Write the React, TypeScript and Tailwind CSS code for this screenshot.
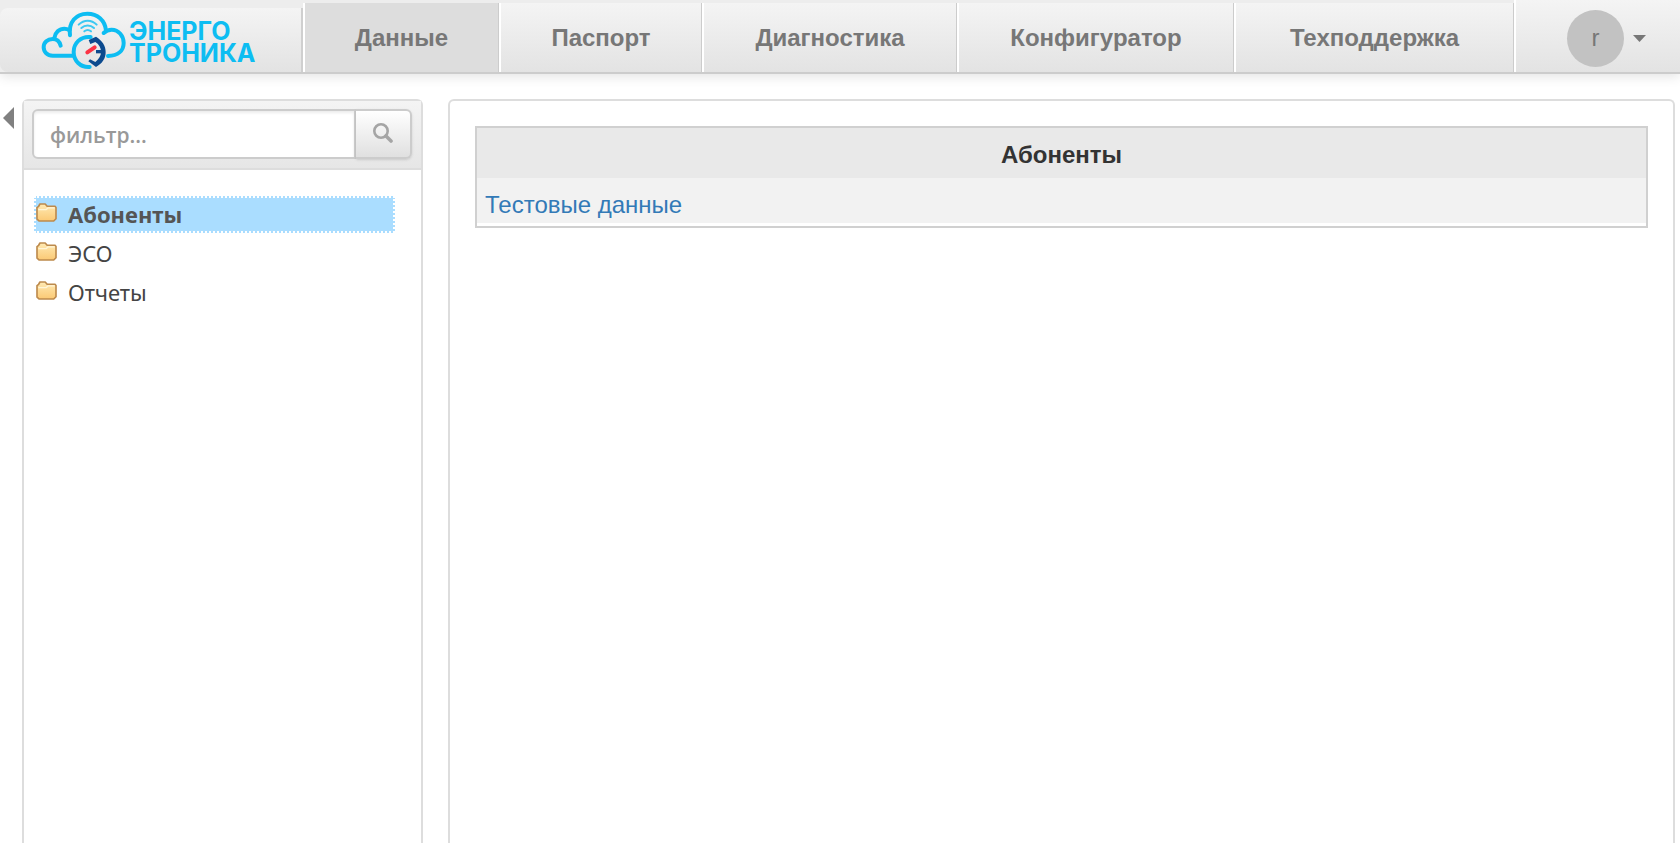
import React from 'react';

interface NavTab {
  label: string;
  width: string;
  active?: boolean;
}

interface TreeNode {
  label: string;
  selected?: boolean;
}

const tabs: NavTab[] = [
  { label: 'Данные', width: 'min-w-[196px]', active: true },
  { label: 'Паспорт', width: 'min-w-[203px]' },
  { label: 'Диагностика', width: 'min-w-[255px]' },
  { label: 'Конфигуратор', width: 'min-w-[277px]' },
  { label: 'Техподдержка', width: 'min-w-[280px]' },
];

const nodes: TreeNode[] = [
  { label: 'Абоненты', selected: true },
  { label: 'ЭСО' },
  { label: 'Отчеты' },
];

const LogoMark: React.FC = () => (
  <svg viewBox="120 30 261 180" className="h-[60px] w-[87px] shrink-0" fill="none" aria-hidden="true">
    <g stroke="#0dbdf2" strokeWidth="12" strokeLinecap="round" strokeLinejoin="round">
      <path d="M218 167H158C142 167 131 156 131 142C131 127 143 117 158 117C170 117 179 125 182 137" />
      <path d="M163 114C165 98 178 86 193 86C199 86 204 88 209 91" />
      <path d="M210 106C205 66 228 41 262 41C292 41 315 61 318 91" />
      <path d="M311 99C318 92 325 89 335 89C356 89 371 108 371 129C371 152 354 167 324 168" />
      <path d="M272 111C241 108 221 130 221 156C221 182 241 203 269 201" />
    </g>
    <g stroke="#3cc8f2" strokeWidth="6" strokeLinecap="round">
      <path d="M236 74C252 58 274 58 290 74" />
      <path d="M244 84C255 74 271 74 282 84" />
      <path d="M253 94C259 89 267 89 273 94" />
    </g>
    <g fill="#0c4a8e">
      <path d="M266 120L288 110C307 122 317 137 317 156C317 176 307 190 288 201L265 184L270 178L286 186C298 176 303 166 303 155C303 144 298 134 286 126L271 132Z" />
      <path d="M288 150H308V160H288Z" />
    </g>
    <path d="M262 157L284 142" stroke="#fb3344" strokeWidth="12" strokeLinecap="round" />
  </svg>
);

const FolderIcon: React.FC = () => (
  <svg viewBox="0 0 64 58" className="mb-1 h-[19px] w-[21px] shrink-0" aria-hidden="true">
    <defs>
      <linearGradient id="folder" x1="0" y1="0" x2="0" y2="1">
        <stop offset="0" stopColor="#ffeab4" />
        <stop offset="1" stopColor="#fbc974" />
      </linearGradient>
    </defs>
    <path
      d="M3 14L8 10L12 3H28L34 10H58L61 14V48L54 55H10L3 49V18Z"
      fill="url(#folder)"
      stroke="#bd8a4c"
      strokeWidth="5"
      strokeLinejoin="round"
    />
    <path d="M7 20H31L37 15H57" fill="none" stroke="#fff5d8" strokeWidth="4" />
  </svg>
);

const Header: React.FC = () => (
  <header className="flex h-[74px] border-b-2 border-[#cccccc] bg-[#ededed] shadow-[0_2px_12px_rgba(0,0,0,0.12)]">
    <a
      href="#"
      className="mt-2 flex w-[303px] shrink-0 items-center rounded-l-lg border-r-2 border-[#cfcfcf] bg-linear-to-b from-[#f4f4f4] to-[#e3e3e3] pl-10"
    >
      <LogoMark />
      <span className="flex flex-col pt-1 pl-[2px] font-['Inter'] text-[25px]/[22px] font-bold text-[#0dbdf2]">
        <span>ЭНЕРГО</span>
        <span>ТРОНИКА</span>
      </span>
    </a>
    <nav className="mt-[3px] flex">
      {tabs.map((tab) => (
        <a
          key={tab.label}
          href="#"
          className={`flex items-center justify-center border-r border-l-2 border-r-[#cccccc] border-l-white text-2xl font-bold text-[#777777] ${tab.width} ${
            tab.active ? 'bg-[#dddddd]' : 'bg-linear-to-b from-[#f4f4f4] to-[#e3e3e3]'
          }`}
        >
          {tab.label}
        </a>
      ))}
    </nav>
    <div className="flex flex-1 items-center justify-end border-l-2 border-white bg-linear-to-b from-[#f4f4f4] to-[#e3e3e3] pt-1 pr-[34px]">
      <button type="button" className="flex items-center gap-[9px] text-2xl text-[#777777]">
        <span className="flex size-[57px] items-center justify-center rounded-full bg-[#c2c2c2]">r</span>
        <svg viewBox="0 0 13 7" className="h-[7px] w-[13px]" aria-hidden="true">
          <path d="M0 0H13L6.5 7Z" fill="#777777" />
        </svg>
      </button>
    </div>
  </header>
);

const Sidebar: React.FC = () => (
  <aside className="w-[401px] shrink-0 rounded-t-md border-2 border-b-0 border-[#dddddd]">
    <form className="flex h-[69px] border-b-2 border-[#dddddd] bg-linear-to-b from-[#f4f4f4] to-[#e6e6e6] pt-2 pr-[9px] pl-2">
      <input
        type="text"
        aria-label="фильтр"
        placeholder="фильтр..."
        className="h-[50px] min-w-0 flex-1 rounded-l-md border-2 border-[#cccccc] bg-white px-4 pt-[2px] font-['Open_Sans'] text-[21px] font-semibold shadow-[inset_0_2px_3px_rgba(0,0,0,0.08)] placeholder:text-[#999999]"
      />
      <button
        type="button"
        aria-label="Найти"
        className="flex h-[50px] w-[56px] items-center justify-center rounded-r-md border-2 border-l-0 border-[#cccccc] bg-linear-to-b from-white to-[#e0e0e0] pb-[2px] shadow-sm"
      >
        <svg viewBox="0 0 20 20" className="size-5" fill="none" stroke="#a5a5a5" aria-hidden="true">
          <circle cx="8" cy="8" r="6.7" strokeWidth="2.6" />
          <path d="M13 13L18 18" strokeWidth="3.6" strokeLinecap="round" />
        </svg>
      </button>
    </form>
    <ul className="flex flex-col gap-[2px] pt-[26px] pr-[26px] pl-[10px]">
      {nodes.map((node) => (
        <li key={node.label}>
          <a
            href="#"
            className={
              node.selected
                ? "flex h-[37px] items-center gap-[11px] border-2 border-dotted border-white bg-[#aaddff] font-['Noto_Sans'] text-[22px] font-bold text-[#555555]"
                : "flex h-[37px] items-center gap-[11px] border-2 border-transparent font-['Noto_Sans'] text-[22px] text-[#444444]"
            }
          >
            <FolderIcon />
            {node.label}
          </a>
        </li>
      ))}
    </ul>
  </aside>
);

const App: React.FC = () => {
  return (
    <div className="flex min-h-screen flex-col bg-white font-['Liberation_Sans',Arial,sans-serif] text-[#333333]">
      <Header />
      <div className="flex flex-1 pt-[25px] pr-[5px]">
        <button type="button" aria-label="Свернуть" className="mt-2 h-[22px] w-[22px] shrink-0 pl-[3px]">
          <svg viewBox="0 0 11 22" className="h-[22px] w-[11px]" aria-hidden="true">
            <path d="M11 0V22L0 11Z" fill="#808080" />
          </svg>
        </button>
        <Sidebar />
        <main className="ml-[25px] flex-1 rounded-t-md border-2 border-b-0 border-[#dddddd] p-[25px]">
          <table className="w-full border-separate border-spacing-0 border-2 border-[#d0d0d0] pb-[3px]">
            <thead>
              <tr>
                <th className="h-[50px] bg-[#e9e9e9] p-0 pt-1 text-2xl font-bold">Абоненты</th>
              </tr>
            </thead>
            <tbody>
              <tr>
                <td className="h-[45px] bg-[#f2f2f2] px-2 py-0 pt-2 text-2xl">
                  <a href="#" className="text-[#337ab7]">Тестовые данные</a>
                </td>
              </tr>
            </tbody>
          </table>
        </main>
      </div>
    </div>
  );
};

export default App;
